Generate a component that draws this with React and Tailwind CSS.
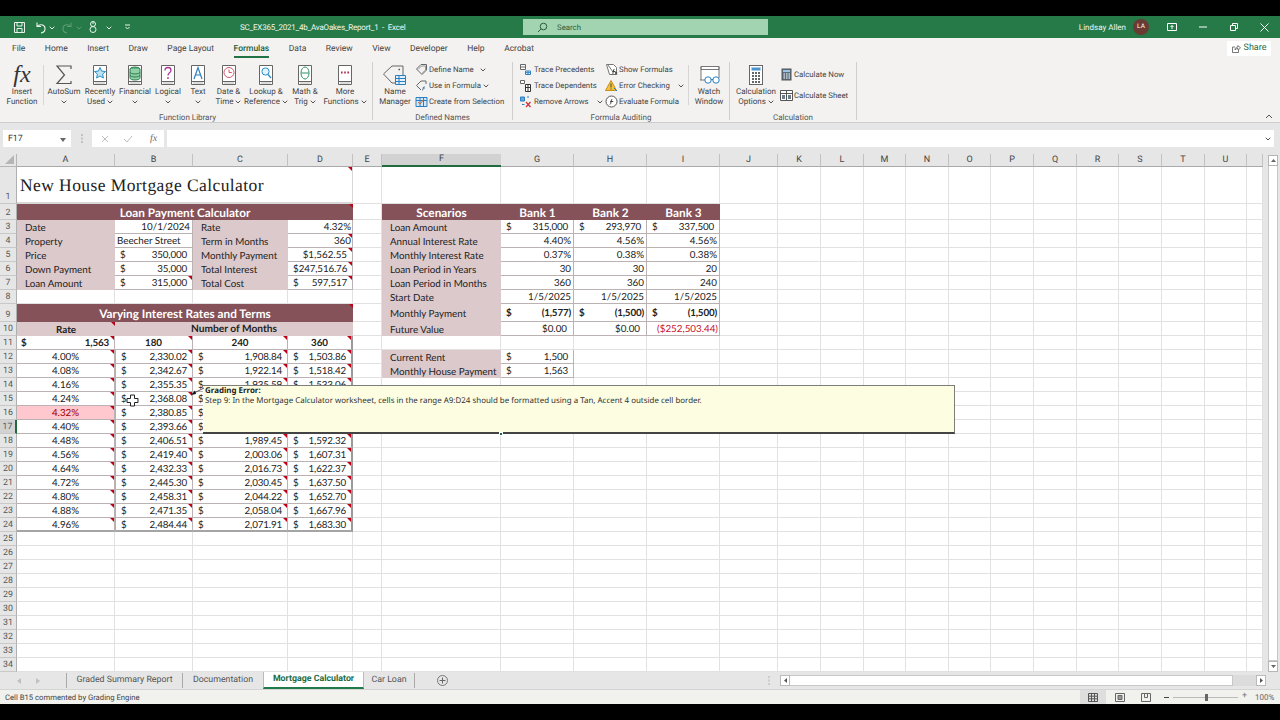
import React from "react";

const UI = "font-['Roboto',sans-serif]";
const Chev = ({ c = "#555" }) => (
  <svg width="6" height="4" viewBox="0 0 6 4" className="inline-block shrink-0"><path d="M.7.7 3 3 5.3.7" fill="none" stroke={c} strokeWidth="1" /></svg>
);

const Book = ({ children }) => (
  <svg width="18" height="22" viewBox="0 0 18 22">
    <path d="M2.5 1.5h13v19h-13z" fill="#fff" stroke="#666" />
    <path d="M2.5 17.5h13" stroke="#666" />
    <path d="M4 19h10" stroke="#bbb" />
    {children}
  </svg>
);

const icons = {
  sigma: <svg width="20" height="22" viewBox="0 0 20 22"><path d="M17 5V2H3l7.5 9L3 19.5h14V17" fill="none" stroke="#555" strokeWidth="1.2" /></svg>,
  recent: <Book><path d="M9 3.5l1.6 3.6 3.9.4-2.9 2.6.8 3.9L9 12l-3.4 2 .8-3.9-2.9-2.6 3.9-.4z" fill="#bde3f5" stroke="#2a8dc5" /></Book>,
  finance: <Book><ellipse cx="9" cy="5" rx="5" ry="2" fill="#5cb27c" stroke="#2f7d4e" /><path d="M4 5v9c0 1 2 2 5 2s5-1 5-2V5M4 8c0 1 2 2 5 2s5-1 5-2M4 11c0 1 2 2 5 2s5-1 5-2" fill="#8fd0a6" stroke="#2f7d4e" /></Book>,
  logical: <Book><path d="M6 6.5c0-2 1.4-3 3-3s3 1 3 2.8c0 2.6-3 2.5-3 5.2" fill="none" stroke="#a6389b" strokeWidth="1.3" /><path d="M9 13v2" stroke="#a6389b" strokeWidth="1.4" /></Book>,
  text: <Book><path d="M5 15 9 3.5 13 15M6.4 11h5.2" fill="none" stroke="#2a7fc0" strokeWidth="1.2" /></Book>,
  date: <Book><circle cx="9" cy="8.5" r="5" fill="#fff" stroke="#d0576d" /><path d="M9 5.5v3h2.8" fill="none" stroke="#d0576d" /></Book>,
  lookup: <Book><circle cx="8.5" cy="7.5" r="3.6" fill="#e4f3fb" stroke="#2a8dc5" /><path d="m11 10.5 3 3.5" stroke="#2a8dc5" strokeWidth="1.3" /></Book>,
  math: <Book><ellipse cx="9" cy="9" rx="4" ry="6" fill="#fff" stroke="#2f8f62" /><path d="M5.5 9h7" stroke="#2f8f62" /></Book>,
  more: <Book><path d="M5 8.5h1.6M8.2 8.5h1.6M11.4 8.5H13" stroke="#b02a4a" strokeWidth="1.8" /></Book>,
  name: (
    <svg width="26" height="24" viewBox="0 0 26 24">
      <path d="M1.5 11 10 3h11v9M15 20h-5L1.5 11" fill="none" stroke="#666" />
      <path d="M16.5 6.5h1.5" stroke="#555" strokeWidth="1.5" />
      <path d="M13.5 12.5h10v9h-10zM13.5 15.5h10M13.5 18.5h10M17 12.5v9" fill="#e4f0fa" stroke="#2a7fc0" />
    </svg>
  ),
  watch: (
    <svg width="24" height="22" viewBox="0 0 24 22">
      <path d="M4 16V2.5h18V14M4 2.5h18v3H4z" fill="#fff" stroke="#777" />
      <path d="M3 16h5" stroke="#777" />
      <circle cx="11" cy="16" r="3.2" fill="#fff" stroke="#2a7fc0" /><circle cx="19" cy="16" r="3.2" fill="#fff" stroke="#2a7fc0" />
      <path d="M14 15.500h2" stroke="#2a7fc0" />
    </svg>
  ),
  calc: (
    <svg width="16" height="22" viewBox="0 0 16 22">
      <rect x="1.500" y="1.500" width="13" height="19" fill="#fff" stroke="#666" />
      <rect x="3.500" y="3.500" width="9" height="3" fill="#4a93cf" />
      <path d="M4 9h2M7 9h2M10 9h2M4 12h2M7 12h2M10 12h2M4 15h2M7 15h2M10 15h2M4 18h2M7 18h2M10 18h2" stroke="#333" strokeWidth="1.6" />
    </svg>
  ),
};

const S = ({ children, w = 13, h = 13 }) => <svg width={w} height={h} viewBox="0 0 13 13" className="shrink-0">{children}</svg>;
const small = {
  define: <S><path d="M1.500 6 6 1.500h5.500V7L7 11.500z" fill="none" stroke="#666" /><path d="M3 6.500 6.500 3h4v4L7 10.300" fill="none" stroke="#999" /></S>,
  use: <S><path d="M1.500 6.500 6 2h5v3M6 11 1.500 6.500" fill="none" stroke="#666" /><path d="M7 11.500c1.500 0 1-4 2.500-4M7.700 9H10" fill="none" stroke="#4a7a9c" /></S>,
  create: <S><path d="M1 2.500h11v9H1zM1 5.500h11M5 2.500v9M8.500 2.500v9" fill="#d6e8f7" stroke="#2a7fc0" /><path d="m3 7 2 2 4-5" fill="none" stroke="#c2693a" /></S>,
  prec: <S><path d="M1.500 1.500h5v5h-5zM1.500 4h5" fill="#fff" stroke="#666" /><path d="M6.500 11.500h5V8h-5zM6.500 9.700h5M9 8v3.500" fill="#fff" stroke="#2a7fc0" /></S>,
  dep: <S><path d="M1.500 1.500h4v3h-4z" fill="#fff" stroke="#666" /><path d="M6.500 5.500h5v7h-5zM6.500 8.500h5M9 5.500v7" fill="#fff" stroke="#333" /></S>,
  remove: <S><path d="M1.500 2h4v4h-4z" fill="#6aa5dc" stroke="#2a7fc0" /><path d="M3 9.500h2.500M8 2h2" stroke="#2a7fc0" /><path d="m7 7 4.500 5M11.500 7 7 12" stroke="#d13438" strokeWidth="1.300" /></S>,
  show: <S><path d="M1.500 1.500h7l3 3v7h-7z" fill="#fff" stroke="#777" /><path d="M3 2 8 9" stroke="#777" /><path d="M7 11.500c1.500 0 1-5.500 2.500-5.500M7.500 8.500h3M10 9l2 2.500M12 9l-2 2.500" fill="none" stroke="#444" /></S>,
  error: <S><path d="M6 1.500 11.500 11.500H.5z" fill="#f3c13a" stroke="#c98f1a" /><path d="M6 4.500v4M6 9.500v1" stroke="#444" /><path d="m9 9 3 3" stroke="#2a7fc0" /></S>,
  evaluate: <S><circle cx="6.500" cy="6.500" r="5.500" fill="#fff" stroke="#555" /><path d="M5 9.500c1.200 0 .8-5.500 2.300-5.500M5.200 6.500h3" fill="none" stroke="#444" /></S>,
  now: <S><rect x="2" y="1" width="9" height="11" fill="#5b6f80" stroke="#555" /><rect x="3" y="2" width="7" height="2" fill="#9cc5e5" /><path d="M3.500 6h1.500M6 6h1.500M8.500 6H10M3.500 8h1.500M6 8h1.500M8.500 8H10M3.500 10h1.500M6 10h1.500M8.500 10H10" stroke="#fff" /></S>,
  sheet: <S><path d="M.5 1.500h12v10H.5zM.5 4.500h12M6.500 1.500v10" fill="#fff" stroke="#555" /><path d="M2 6h3v4H2zM8 6h3v4H8z" fill="#6b7d8c" /></S>,
};

const Big = ({ w, icon, lines, chev }) => (
  <div className={`${w} flex flex-col items-center pt-[6px] shrink-0`}>
    <div className="h-[23px] pb-px flex items-center justify-center">{icon}</div>
    <div className="text-[8px] leading-[10px] text-[#444] text-center whitespace-nowrap">
      <div>{lines[0]}</div>
      <div className="h-[10px] flex items-center justify-center gap-[2px]">{lines[1] ? <span>{lines[1]}</span> : null}{chev ? <Chev /> : null}</div>
    </div>
  </div>
);

const Small = ({ icon, label, chev, gap = "gap-[1px]", h = "h-[16px]", cg = "gap-[4px]" }) => (
  <div className={`${h} flex items-center ${gap} text-[7.800px] text-[#444] whitespace-nowrap`}>
    {icon}
    <span className={`flex items-center pt-px ${cg}`}>{label}{chev ? <Chev /> : null}</span>
  </div>
);

const Group = ({ w, label, children }) => (
  <div className={`${w} flex flex-col shrink-0 h-full`}>
    <div className="h-[54px] flex">{children}</div>
    <div className="h-[10px] text-[8px] leading-[12px] text-center text-[#555] whitespace-nowrap">{label}</div>
  </div>
);
const Sep = () => <div className="w-px shrink-0 bg-[#cfcfcf] mt-[4px] mb-[2px]" />;
const InnerSep = () => <div className="w-px shrink-0 bg-[#d6d6d6] h-[40px] mt-[7px]" />;

const Ribbon = () => (
  <div className="h-[64px] bg-[#f3f2f1] flex pl-[3px] shrink-0">
    <Group w="w-[369px]" label="Function Library">
      <div className="w-[38px] flex flex-col items-center pt-[4px] shrink-0">
        <div className="h-[25px] flex items-center justify-center font-['Liberation_Serif',serif] italic text-[24px] leading-[22px] text-[#333]">fx</div>
        <div className="text-[8px] leading-[10px] text-[#444] text-center"><div>Insert</div><div>Function</div></div>
      </div>
      <div className="w-[2px]" />
      <InnerSep />
      <div className="w-[2px]" />
      <Big w="w-[36px]" icon={icons.sigma} lines={["AutoSum"]} chev />
      <Big w="w-[36px]" icon={icons.recent} lines={["Recently", "Used"]} chev />
      <Big w="w-[34px]" icon={icons.finance} lines={["Financial"]} chev />
      <Big w="w-[32px]" icon={icons.logical} lines={["Logical"]} chev />
      <Big w="w-[28px]" icon={icons.text} lines={["Text"]} chev />
      <Big w="w-[33px]" icon={icons.date} lines={["Date &", "Time"]} chev />
      <Big w="w-[42px]" icon={icons.lookup} lines={["Lookup &", "Reference"]} chev />
      <Big w="w-[36px]" icon={icons.math} lines={["Math &", "Trig"]} chev />
      <Big w="w-[44px]" icon={icons.more} lines={["More", "Functions"]} chev />
    </Group>
    <Sep />
    <Group w="w-[139px]" label="Defined Names">
      <div className="w-[2px]" />
      <Big w="w-[40px]" icon={icons.name} lines={["Name", "Manager"]} />
      <div className="pt-[3px]">
        <Small icon={small.define} label="Define Name" chev cg="gap-[6px]" />
        <Small icon={small.use} label="Use in Formula" chev cg="gap-[2px]" />
        <Small icon={small.create} label="Create from Selection" />
      </div>
    </Group>
    <Sep />
    <Group w="w-[216px]" label="Formula Auditing">
      <div className="w-[6px]" />
      <div className="w-[86px] pt-[3px]">
        <Small icon={small.prec} label="Trace Precedents" gap="gap-[2px]" />
        <Small icon={small.dep} label="Trace Dependents" gap="gap-[2px]" />
        <Small icon={small.remove} label="Remove Arrows" chev cg="gap-[8px]" gap="gap-[2px]" />
      </div>
      <div className="w-[83px] pt-[3px]">
        <Small icon={small.show} label="Show Formulas" />
        <Small icon={small.error} label="Error Checking" chev cg="gap-[8px]" />
        <Small icon={small.evaluate} label="Evaluate Formula" />
      </div>
      <InnerSep />
      <Big w="w-[40px]" icon={icons.watch} lines={["Watch", "Window"]} />
    </Group>
    <Sep />
    <Group w="w-[126px]" label="Calculation">
      <div className="w-[2px]" />
      <Big w="w-[48px]" icon={icons.calc} lines={["Calculation", "Options"]} chev />
      <div className="pt-[8px] flex flex-col gap-[5px]">
        <Small icon={small.now} label="Calculate Now" />
        <Small icon={small.sheet} label="Calculate Sheet" />
      </div>
    </Group>
    <Sep />
    <div className="flex-1 flex items-end justify-end pr-[7px] pb-[3px]">
      <svg width="8" height="5" viewBox="0 0 8 5"><path d="m1 4 3-3 3 3" fill="none" stroke="#555" /></svg>
    </div>
  </div>
);

const TitleBar = () => (
  <div className="h-[22px] bg-[#257a48] flex items-center text-white shrink-0">
    <div className="w-[240px] flex items-center pl-[13px] shrink-0">
      <svg width="13" height="13" viewBox="0 0 13 13"><path d="M1.500 1.500h10v10h-10zM4 1.500V5h5V1.500M4 11.500V7.500h5v4" fill="none" stroke="#e9f3ec" /></svg>
      <svg width="13" height="13" viewBox="0 0 13 13" className="ml-[8px]"><path d="M3 1.500v4h4M3.500 5.500c2-3 7-2 7.500 1.500.3 2.500-1.500 4.500-4 5" fill="none" stroke="#e9f3ec" strokeWidth="1.100" /></svg>
      <span className="ml-[2px]"><Chev c="#e9f3ec" /></span>
      <svg width="13" height="13" viewBox="0 0 13 13" className="ml-[6px]"><path d="M10 1.500v4H6M9.500 5.500c-2-3-7-2-7.500 1.500-.3 2.500 1.500 4.500 4 5" fill="none" stroke="#5c9a74" strokeWidth="1.100" /></svg>
      <span className="ml-[2px]"><Chev c="#5c9a74" /></span>
      <svg width="12" height="14" viewBox="0 0 12 14" className="ml-[5px]"><circle cx="6" cy="4" r="2.500" fill="none" stroke="#e9f3ec" /><circle cx="6" cy="9.500" r="3" fill="none" stroke="#e9f3ec" /><path d="M6 1v3" stroke="#e9f3ec" /></svg>
      <span className="ml-[7px]"><Chev c="#e9f3ec" /></span>
      <svg width="7" height="6" viewBox="0 0 7 6" className="ml-[12px]"><path d="M1 1h5M1.500 3 3.500 5l2-2" fill="none" stroke="#e9f3ec" /></svg>
    </div>
    <div className="w-[283px] shrink-0 text-[8px] tracking-[-0.2px] text-[#eef6f0] whitespace-nowrap pt-px">SC_EX365_2021_4b_AvaOakes_Report_1&nbsp; -&nbsp; Excel</div>
    <div className="w-[245px] h-[16px] bg-[#a3d4b1] flex items-center pl-[14px] gap-[9px] text-[7.800px] text-[#2f5d40] shrink-0">
      <svg width="11" height="11" viewBox="0 0 11 11"><circle cx="6.500" cy="4.500" r="3.300" fill="none" stroke="#2f5d40" /><path d="M4 7 1 10" stroke="#2f5d40" /></svg>
      <span className="pt-px">Search</span>
    </div>
    <div className="w-[358px] shrink-0 text-right text-[8px] text-[#eef6f0] whitespace-nowrap pt-px">Lindsay Allen</div>
    <div className="ml-[7px] w-[16px] h-[16px] rounded-full bg-[#6a3b33] flex items-center justify-center text-[6.500px] text-white shrink-0">LA</div>
    <svg width="10" height="8" viewBox="0 0 10 8" className="ml-[18px]"><path d="M.5.500h9v7h-9z" fill="none" stroke="#fff" /><path d="M5 6V2.500M3.500 4 5 2.500 6.500 4" fill="none" stroke="#fff" /></svg>
    <svg width="8" height="2" viewBox="0 0 8 2" className="ml-[22px]"><path d="M0 1h8" stroke="#fff" /></svg>
    <svg width="8" height="8" viewBox="0 0 8 8" className="ml-[23px]"><path d="M.5 2.500h5v5h-5zM2.500 2.500v-2h5v5h-2" fill="none" stroke="#fff" /></svg>
    <svg width="9" height="9" viewBox="0 0 9 9" className="ml-[22px]"><path d="m.5.500 8 8M8.500.500l-8 8" stroke="#fff" /></svg>
  </div>
);

const TabsRow = () => (
  <div className="h-[20px] bg-[#f3f2f1] flex items-center justify-between shrink-0 pl-[12px] pr-[9px]">
    <div className="flex gap-[19.500px] text-[8.500px] text-[#444] whitespace-nowrap">
      {["File", "Home", "Insert", "Draw", "Page Layout"].map((t) => <span key={t} className="h-[20px] leading-[23px]">{t}</span>)}
      <span className="h-[20px] leading-[23px] text-[#1d5c38] font-medium border-b-2 border-[#217346]">Formulas</span>
      {["Data", "Review", "View", "Developer", "Help", "Acrobat"].map((t) => <span key={t} className="h-[20px] leading-[23px]">{t}</span>)}
    </div>
    <div className="w-[44px] h-[15px] bg-white flex items-center justify-center gap-[3px] text-[9px] text-[#1d6b42] mt-[1px]">
      <svg width="9" height="9" viewBox="0 0 9 9"><path d="M3 3H.5v5.500h6V6M3 6c0-2 1-3 3-3V1.500L8.500 4 6 6V4.500C4.500 4.500 3.500 5 3 6z" fill="none" stroke="#555" strokeWidth=".8" /></svg>
      <span className="pt-px">Share</span>
    </div>
  </div>
);

const FormulaBar = () => (
  <div className="h-[32px] bg-[#e6e6e6] border-t border-[#cdcdcd] shrink-0 pt-[7px]">
    <div className="h-[17px] flex items-stretch pl-[3px] pr-[6px]">
      <div className="w-[68px] bg-white flex items-center justify-between pl-[5px] pr-[5px] pt-[2px] text-[8.800px] text-[#333]">F17<svg width="6" height="4" viewBox="0 0 6 4"><path d="M0 0h6L3 4z" fill="#666" /></svg></div>
      <div className="w-[21px] flex items-center justify-center"><svg width="2" height="9" viewBox="0 0 2 9"><path d="M1 0v2M1 3.500v2M1 7v2" stroke="#aaa" strokeWidth="1.200" /></svg></div>
      <div className="w-[72px] bg-white flex items-center pl-[9px] gap-[14px]">
        <svg width="8" height="8" viewBox="0 0 8 8"><path d="m1 1 6 6M7 1 1 7" stroke="#bdbdbd" /></svg>
        <svg width="10" height="8" viewBox="0 0 10 8"><path d="m1 4 3 3 5-6" fill="none" stroke="#bdbdbd" /></svg>
        <span className="font-['Liberation_Serif',serif] italic text-[10px] text-[#666] ml-[3px]">fx</span>
      </div>
      <div className="w-[3px]" />
      <div className="flex-1 bg-white flex items-center justify-end pr-[3px]"><Chev /></div>
    </div>
  </div>
);

/* ---------- sheet ---------- */
const LETTERS = ["A","B","C","D","E","F","G","H","I","J","K","L","M","N","O","P","Q","R","S","T","U",""];
const PINK = "bg-[#dcc9cb]";
const MAROON = "bg-[#85525a] text-white font-bold text-[11.800px]";
const HEAD = `${MAROON} justify-center pb-px`;
const BD = "border-r border-b border-[#bcb2b4]";

const Tri = () => <span className="absolute top-0 right-0 w-0 h-0 border-t-[4.500px] border-l-[4.500px] border-t-[#c00018] border-l-transparent" />;

const label = (t, extra = "") => ({ t, cls: `${PINK} justify-start pl-[8px] ${extra}` });
const acc = (v, o = {}) => ({ d: v, ...o });
const rt = (t, o = {}) => ({ t, cls: `justify-end ${o.pr || "pr-[2px]"} ${BD} ${o.cls || ""}`, tri: o.tri });
const ctr = (t, o = {}) => ({ t, cls: `justify-center ${BD} ${o.cls || ""}`, tri: o.tri });

const rates = ["4.00%","4.08%","4.16%","4.24%","4.32%","4.40%","4.48%","4.56%","4.64%","4.72%","4.80%","4.88%","4.96%"];
const B = ["2,330.02","2,342.67","2,355.35","2,368.08","2,380.85","2,393.66","2,406.51","2,419.40","2,432.33","2,445.30","2,458.31","2,471.35","2,484.44"];
const C = ["1,908.84","1,922.14","1,935.59","1,949.11","1,962.75","1,976.05","1,989.45","2,003.06","2,016.73","2,030.45","2,044.22","2,058.04","2,071.91"];
const D = ["1,503.86","1,518.42","1,533.06","1,547.81","1,562.55","1,577.42","1,592.32","1,607.31","1,622.37","1,637.50","1,652.70","1,667.96","1,683.30"];

const sheet = {
  1: { A: { t: "New House Mortgage Calculator", span: 4, tri: true, cls: "justify-start pl-[3px] font-['Liberation_Serif',serif] text-[17.500px] tracking-[0.42px] text-[#222] border-r border-b-2 border-[#d8d8d8] bg-white" } },
  2: {
    A: { t: "Loan Payment Calculator", span: 4, tri: true, cls: HEAD },
    F: { t: "Scenarios", cls: HEAD }, G: { t: "Bank 1", cls: HEAD },
    H: { t: "Bank 2", cls: HEAD }, I: { t: "Bank 3", cls: HEAD },
  },
  3: { A: label("Date"), B: rt("10/1/2024", { cls: "" }), C: label("Rate"), D: rt("4.32%", { pr: "pr-[1px]" }),
    F: label("Loan Amount"), G: acc("315,000"), H: acc("293,970"), I: acc("337,500") },
  4: { A: label("Property"), B: { t: "Beecher Street", cls: `justify-start pl-[2px] ${BD}` }, C: label("Term in Months"), D: rt("360", { pr: "pr-[1px]", tri: true }),
    F: label("Annual Interest Rate"), G: rt("4.40%"), H: rt("4.56%"), I: rt("4.56%") },
  5: { A: label("Price"), B: acc("350,000"), C: label("Monthly Payment"), D: rt("$1,562.55", { pr: "pr-[5px]", tri: true }),
    F: label("Monthly Interest Rate"), G: rt("0.37%"), H: rt("0.38%"), I: rt("0.38%") },
  6: { A: label("Down Payment"), B: acc("35,000"), C: label("Total Interest"), D: { d: "247,516.76", tri: true },
    F: label("Loan Period in Years"), G: rt("30"), H: rt("30"), I: rt("20") },
  7: { A: label("Loan Amount"), B: acc("315,000", { tri: true }), C: label("Total Cost"), D: acc("597,517", { tri: true }),
    F: label("Loan Period in Months"), G: rt("360"), H: rt("360"), I: rt("240") },
  8: { F: label("Start Date"), G: rt("1/5/2025"), H: rt("1/5/2025"), I: rt("1/5/2025") },
  9: { A: { t: "Varying Interest Rates and Terms", span: 4, tri: true, cls: `${MAROON} justify-center` },
    F: label("Monthly Payment"), G: { d: "(1,577)", bold: true, pr: "pr-[2px]" }, H: { d: "(1,500)", bold: true, pr: "pr-[2px]" }, I: { d: "(1,500)", bold: true, pr: "pr-[2px]" } },
  10: { A: { t: "Rate", tri: true, cls: `${PINK} justify-center font-bold` }, B: { t: "Number of Months", span: 3, cls: `${PINK} justify-center font-bold text-[10.200px]` },
    F: label("Future Value"), G: rt("$0.00", { pr: "pr-[6px]" }), H: rt("$0.00", { pr: "pr-[6px]" }), I: rt("($252,503.44)", { pr: "pr-[1px]", cls: "text-[#c8102e]" }) },
  11: { A: { d: "1,563", bold: true, tri: true, left: "pl-[4px]" }, B: ctr("180", { cls: "font-bold", tri: true }), C: ctr("240", { cls: "font-bold", tri: true }), D: ctr("360", { cls: "font-bold border-r-2 border-r-[#9a9a9a]", tri: true }) },
};
rates.forEach((r, i) => {
  const n = 12 + i;
  const edge = i === 12 ? "border-b-2 border-b-[#a5a5a5]" : "";
  sheet[n] = {
    A: ctr(r, { tri: true, cls: (r === "4.32%" ? "bg-[#ffc7ce] text-[#9c0006] " : "") + edge }),
    B: acc(B[i], { tri: true, cls: `border-l border-l-[#b0b0b0] ${edge}` }),
    C: acc(C[i], { tri: true, cls: edge }),
    D: acc(D[i], { tri: true, left: "pl-[5px]", cls: `border-r-2 border-r-[#9a9a9a] ${edge}` }),
  };
});
sheet[12] = { ...sheet[12], F: label("Current Rent"), G: acc("1,500") };
sheet[13] = { ...sheet[13], F: label("Monthly House Payment"), G: acc("1,563") };
sheet[17] = { ...sheet[17], F: { t: "", cls: "border-b-2 border-b-[#1f6b3f]" } };

const SPAN = { 3: "col-span-3", 4: "col-span-4" };

const Cell = ({ c }) => {
  if (c.d !== undefined) {
    return (
      <div className={`relative flex items-center justify-between min-w-0 pt-[2px] ${c.left || "pl-[5px]"} ${c.pr || "pr-[5px]"} ${BD} ${c.bold ? "font-bold" : ""} ${c.cls || ""}`}>
        <span>$</span><span className="tracking-[-0.15px]">{c.d}</span>
        {c.tri ? <Tri /> : null}
      </div>
    );
  }
  return (
    <div className={`relative flex items-center min-w-0 pt-[2px] whitespace-nowrap ${c.span ? SPAN[c.span] : ""} ${c.cls || ""}`}>
      {c.t}
      {c.tri ? <Tri /> : null}
    </div>
  );
};

const Sheet = () => {
  const rows = Array.from({ length: 34 }, (_, i) => i + 1);
  return (
    <div className="grid grid-cols-[17px_98px_78px_95px_65px_29px_119px_73px_73px_73px_58px_43px_43px_42px_43px_42px_43px_43px_42px_43px_43px_42px_16px] grid-rows-[13px_37px_16px_14px_14px_14px_14px_14px_14px_18px_repeat(25,14px)] w-[1263px] h-[518px] overflow-hidden bg-white font-['Lato',sans-serif] text-[9.800px] text-[#222]">
      <div className="bg-[#e6e6e6] border-r border-b border-[#b5b5b5] flex items-end justify-end p-[2px]">
        <svg width="9" height="9" viewBox="0 0 9 9"><path d="M9 0v9H0z" fill="#b5b5b5" /></svg>
      </div>
      {LETTERS.map((l, i) => (
        <div key={i} className={`${UI} text-[9px] pt-px flex items-center justify-center text-[#444] ${l === "F" ? "bg-[#d2d2d2] border-b-2 border-[#1f6b3f] text-[#2c6b45]" : "bg-[#e6e6e6] border-b border-[#a9a9a9] border-r border-r-[#c2c2c2]"}`}>{l}</div>
      ))}
      {rows.map((n) => {
        const spec = sheet[n] || {};
        const out = [
          <div key="h" className={`${UI} text-[8.800px] leading-[12px] flex items-end justify-center text-[#555] ${n === 17 ? "bg-[#d2d2d2] border-r-2 border-[#1f6b3f] text-[#2c6b45]" : "bg-[#e6e6e6] border-r border-r-[#b0b0b0]"} border-b border-b-[#c8c8c8]`}>{n}</div>,
        ];
        let skip = 0;
        LETTERS.forEach((l, i) => {
          if (skip > 0) { skip--; return; }
          const c = spec[l];
          if (c) {
            if (c.span) skip = c.span - 1;
            out.push(<Cell key={i} c={c} />);
          } else {
            out.push(<div key={i} className="border-r border-b border-[#e1e1e1]" />);
          }
        });
        return <React.Fragment key={n}>{out}</React.Fragment>;
      })}
    </div>
  );
};

const VScroll = () => (
  <div className="flex-1 bg-[#e6e6e6] flex flex-col pl-[5px] pr-[2px] pt-px">
    <div className="h-[11px] bg-white border border-[#b5b5b5] flex items-center justify-center"><svg width="5" height="3" viewBox="0 0 5 3"><path d="M2.500 0 5 3H0z" fill="#666" /></svg></div>
    <div className="flex-1 bg-white border-x border-b border-[#c8c8c8]" />
    <div className="h-[11px] bg-white border border-[#b5b5b5] flex items-center justify-center"><svg width="5" height="3" viewBox="0 0 5 3"><path d="M2.500 3 5 0H0z" fill="#666" /></svg></div>
  </div>
);

const Comment = () => (
  <>
    <div className="absolute left-[203px] top-[231px] w-[752px] h-[49px] bg-[#fdfde2] border-t border-r border-[#7d7d7d] border-b-2 border-b-[#444] font-['Noto_Sans',sans-serif] text-[7.950px] leading-[10px] text-[#333] pl-[2px] z-10">
      <div className="font-bold text-[#222]">Grading Error:</div>
      <div className="whitespace-nowrap">Step 9: In the Mortgage Calculator worksheet, cells in the range A9:D24 should be formatted using a Tan, Accent 4 outside cell border.</div>
    </div>
    <svg width="14" height="10" viewBox="0 0 14 10" className="absolute left-[191px] top-[233px] z-10"><path d="M13 1 3 6" stroke="#555" /><path d="M0 8 4 3.500 5 7z" fill="#111" /></svg>
    <svg width="13" height="13" viewBox="0 0 13 13" className="absolute left-[126px] top-[240px] z-10"><path d="M4.500 1h4v3.500H12v4H8.500V12h-4V8.500H1v-4h3.500z" fill="#fff" stroke="#222" /></svg>
    <div className="absolute left-[499px] top-[278px] w-[4px] h-[4px] bg-[#1f6b3f] border border-white z-20" />
  </>
);

const SheetTabs = () => (
  <div className="h-[17px] bg-[#e6e6e6] flex shrink-0 text-[8.800px] text-[#555] whitespace-nowrap">
    <div className="w-[67px] flex items-center pl-[17px] gap-[15px] border-r border-[#aaa] my-[1px]">
      <svg width="4" height="6" viewBox="0 0 4 6"><path d="M4 0v6L0 3z" fill="#c0c0c0" /></svg>
      <svg width="4" height="6" viewBox="0 0 4 6"><path d="M0 0v6l4-3z" fill="#c0c0c0" /></svg>
    </div>
    <div className="w-[116px] flex items-center justify-center border-r border-[#aaa] my-[1px] pt-px">Graded Summary Report</div>
    <div className="w-[80px] flex items-center justify-center pt-px">Documentation</div>
    <div className="w-[101px] bg-white flex items-center justify-center font-bold text-[#1d6b42] border-b-2 border-[#1f7a49] border-x border-x-[#bbb] pt-px">Mortgage Calculator</div>
    <div className="w-[51px] flex items-center justify-center border-r border-[#aaa] my-[1px] pt-px">Car Loan</div>
    <div className="ml-[22px] w-[11px] flex items-center">
      <svg width="11" height="11" viewBox="0 0 11 11"><circle cx="5.500" cy="5.500" r="5" fill="none" stroke="#777" /><path d="M5.500 2.500v6M2.500 5.500h6" stroke="#666" /></svg>
    </div>
    <div className="ml-[320px] w-[12px] flex items-center"><svg width="2" height="9" viewBox="0 0 2 9"><path d="M1 0v2M1 3.500v2M1 7v2" stroke="#bbb" strokeWidth="1.200" /></svg></div>
    <div className="flex items-stretch py-[3px] w-[486px]">
      <div className="w-[10px] bg-white border border-[#bbb] flex items-center justify-center"><svg width="3" height="5" viewBox="0 0 3 5"><path d="M3 0v5L0 2.500z" fill="#555" /></svg></div>
      <div className="w-[443px] bg-white border-y border-r border-[#c8c8c8]" />
      <div className="w-[23px] bg-[#dcdcdc]" />
      <div className="w-[10px] bg-white border border-[#bbb] flex items-center justify-center"><svg width="3" height="5" viewBox="0 0 3 5"><path d="M0 0v5l3-2.500z" fill="#555" /></svg></div>
    </div>
  </div>
);

const StatusBar = () => (
  <div className="h-[15px] bg-[#f1f1ee] border-t border-[#d4d4d4] flex items-center shrink-0 pl-[5px] text-[7.700px] text-[#444] whitespace-nowrap">
    <div className="w-[1075px] shrink-0 pt-px">Cell B15 commented by Grading Engine</div>
    <div className="w-[26px] h-[14px] bg-[#dedede] flex items-center justify-center shrink-0">
      <svg width="10" height="9" viewBox="0 0 10 9"><path d="M.5.500h9v8h-9zM.5 3.200h9M.5 5.800h9M3.500.500v8M6.500.500v8" fill="none" stroke="#555" /></svg>
    </div>
    <div className="w-[27px] flex items-center justify-center shrink-0">
      <svg width="10" height="9" viewBox="0 0 10 9"><path d="M.5.500h9v8h-9z" fill="none" stroke="#666" /><path d="M3 2.500h4v4H3z" fill="#999" stroke="#666" /></svg>
    </div>
    <div className="w-[26px] flex items-center justify-center shrink-0">
      <svg width="10" height="9" viewBox="0 0 10 9"><path d="M.5.500h9v8h-9zM3.500.500v4h3v-4" fill="none" stroke="#666" /></svg>
    </div>
    <div className="w-[5px] h-px bg-[#444] ml-[5px] shrink-0" />
    <div className="relative w-[65px] h-px bg-[#bbb] ml-[4px] shrink-0">
      <div className="absolute left-[32px] top-[-3px] w-[3px] h-[7px] bg-[#666]" />
    </div>
    <span className="ml-[4px] text-[#777] text-[9px]">+</span>
    <span className="ml-[8px] text-[#666] text-[8px] pt-px">100%</span>
  </div>
);

export default function App() {
  return (
    <div className={`w-[1280px] h-[720px] bg-black flex flex-col overflow-hidden [text-rendering:geometricPrecision] ${UI}`}>
      <div className="h-[16px] shrink-0" />
      <TitleBar />
      <TabsRow />
      <Ribbon />
      <FormulaBar />
      <div className="relative flex h-[518px] shrink-0 bg-[#e6e6e6]">
        <Sheet />
        <VScroll />
        <Comment />
      </div>
      <SheetTabs />
      <StatusBar />
    </div>
  );
}
